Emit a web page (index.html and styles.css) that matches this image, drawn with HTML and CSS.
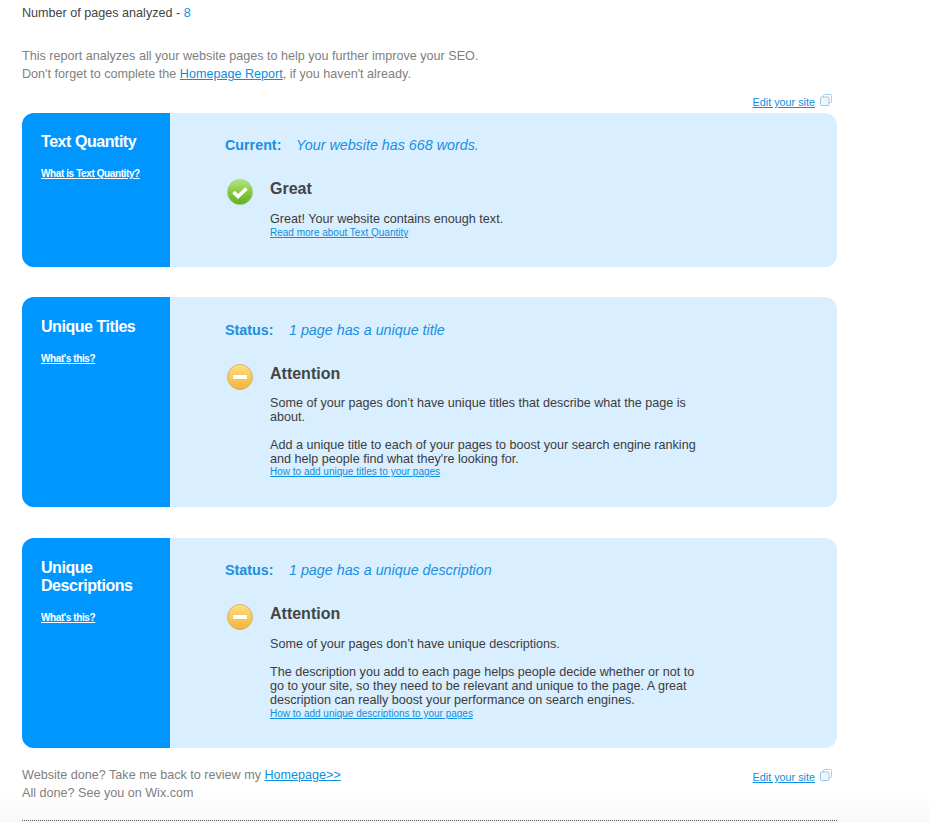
FILE: index.html
```html
<!DOCTYPE html>
<html lang="en">
<head>
<meta charset="utf-8">
<title>SEO Report</title>
<link rel="stylesheet" href="styles.css">
</head>
<body>
<main class="page">
  <p class="count">Number of pages analyzed - <span class="count-num">8</span></p>
  <p class="intro">This report analyzes all your website pages to help you further improve your SEO.<br>Don't forget to complete the <a href="#">Homepage Report</a>, if you haven't already.</p>
  <div class="edit-row">
    <a class="edit-link" href="#">Edit your site</a>
    <svg class="edit-icon" viewBox="0 0 12 12" width="12" height="12"><path d="M3.5 3V1.5a1 1 0 0 1 1-1h6a1 1 0 0 1 1 1v6a1 1 0 0 1-1 1H9" fill="none" stroke="#a9cdea"/><rect x="0.5" y="3" width="8.5" height="8.5" rx="1" fill="#eef6fc" stroke="#9cc6e8"/></svg>
  </div>

  <section class="card card-quantity">
    <div class="side">
      <h2>Text Quantity</h2>
      <a href="#">What is Text Quantity?</a>
    </div>
    <div class="body">
      <p class="status"><b class="label-current">Current:</b><i>Your website has 668 words.</i></p>
      <div class="result">
        <svg class="badge" viewBox="0 0 26 26" width="26" height="26"><defs><linearGradient id="g" x1="0" y1="0" x2="0" y2="1"><stop offset="0" stop-color="#b4e57c"/><stop offset=".55" stop-color="#82c63f"/><stop offset="1" stop-color="#62ad28"/></linearGradient></defs><circle cx="13" cy="13" r="12.6" fill="url(#g)" stroke="#a3cf7c" stroke-width=".6"/><path d="M6.5 13l4.5 4.5 8.5-8" fill="none" stroke="#fff" stroke-width="3.6"/></svg>
        <div class="result-text">
          <h3>Great</h3>
          <p>Great! Your website contains enough text.</p>
          <a class="more" href="#">Read more about Text Quantity</a>
        </div>
      </div>
    </div>
  </section>

  <section class="card card-titles">
    <div class="side">
      <h2>Unique Titles</h2>
      <a href="#">What's this?</a>
    </div>
    <div class="body">
      <p class="status"><b class="label-status">Status:</b><i>1 page has a unique title</i></p>
      <div class="result">
        <svg class="badge" viewBox="0 0 26 26" width="26" height="26"><defs><linearGradient id="y1" x1="0" y1="0" x2="0" y2="1"><stop offset="0" stop-color="#fbdf86"/><stop offset="1" stop-color="#f5b432"/></linearGradient></defs><circle cx="13" cy="13" r="12.5" fill="url(#y1)" stroke="#c9a86a" stroke-width=".8"/><rect x="6" y="11" width="14" height="4" fill="#fff"/></svg>
        <div class="result-text">
          <h3>Attention</h3>
          <p>Some of your pages don’t have unique titles that describe what the page is about.</p>
          <p class="gap">Add a unique title to each of your pages to boost your search engine ranking and help people find what they're looking for.</p>
          <a class="more" href="#">How to add unique titles to your pages</a>
        </div>
      </div>
    </div>
  </section>

  <section class="card card-desc">
    <div class="side">
      <h2>Unique Descriptions</h2>
      <a href="#">What's this?</a>
    </div>
    <div class="body">
      <p class="status"><b class="label-status">Status:</b><i>1 page has a unique description</i></p>
      <div class="result">
        <svg class="badge" viewBox="0 0 26 26" width="26" height="26"><defs><linearGradient id="y2" x1="0" y1="0" x2="0" y2="1"><stop offset="0" stop-color="#fbdf86"/><stop offset="1" stop-color="#f5b432"/></linearGradient></defs><circle cx="13" cy="13" r="12.5" fill="url(#y2)" stroke="#c9a86a" stroke-width=".8"/><rect x="6" y="11" width="14" height="4" fill="#fff"/></svg>
        <div class="result-text">
          <h3>Attention</h3>
          <p>Some of your pages don’t have unique descriptions.</p>
          <p class="gap">The description you add to each page helps people decide whether or not to go to your site, so they need to be relevant and unique to the page. A great description can really boost your performance on search engines.</p>
          <a class="more" href="#">How to add unique descriptions to your pages</a>
        </div>
      </div>
    </div>
  </section>

  <footer class="foot">
    <p>Website done? Take me back to review my <a href="#">Homepage&gt;&gt;</a><br>All done? See you on Wix.com</p>
    <div class="edit-row edit-foot">
      <a class="edit-link" href="#">Edit your site</a>
      <svg class="edit-icon" viewBox="0 0 12 12" width="12" height="12"><path d="M3.5 3V1.5a1 1 0 0 1 1-1h6a1 1 0 0 1 1 1v6a1 1 0 0 1-1 1H9" fill="none" stroke="#a9cdea"/><rect x="0.5" y="3" width="8.5" height="8.5" rx="1" fill="#eef6fc" stroke="#9cc6e8"/></svg>
    </div>
  </footer>
  <div class="rule"></div>
</main>
</body>
</html>
```
FILE: styles.css
```css
html, body { margin: 0; padding: 0; height: 823px; overflow: hidden; }
body {
  background: linear-gradient(#fff 795px, #f8f8f8 823px);
  font-family: "Liberation Sans", Arial, sans-serif;
  color: #808080;
  font-size: 12.6px;
}
.page { width: 815px; padding: 5px 0 0 22px; }
p { margin: 0; }
a { color: #0d8ee0; }
.count { color: #444; line-height: 16px; }
.count-num { color: #0d8ee0; }
.intro { margin-top: 26px; line-height: 18px; }
.edit-row { display: flex; justify-content: flex-end; align-items: flex-start; gap: 5px; padding-right: 5px; height: 20px; margin-top: 10px; }
.edit-link { font-size: 10.8px; margin-top: 3px; }
.edit-icon { display: block; margin-top: 1px; }
.card { display: flex; border-radius: 12px; overflow: hidden; background: #d9eefe; }
.card-quantity { height: 154px; }
.card-titles { height: 210px; margin-top: 30px; }
.card-desc { height: 210px; margin-top: 31px; }
.side { width: 148px; flex: none; background: #0096ff; box-sizing: border-box; padding: 21px 19px 0; color: #fff; }
.card-quantity .side { padding-top: 20px; }
.side h2 { margin: 0; font-size: 16px; line-height: 18px; font-weight: bold; color: #fff; letter-spacing: -0.45px; }
.side a { display: block; width: max-content; margin-top: 17px; font-size: 10px; font-weight: bold; color: #fff; letter-spacing: -0.4px; }
.body { flex: 1; padding: 23px 0 0 55px; }
.card-titles .body { padding-top: 24px; }
.status { color: #1a8fe3; font-size: 14.3px; line-height: 18px; }
.status b { display: inline-block; }
.label-current { width: 71px; }
.label-status { width: 64px; }
.result { display: flex; margin-top: 25px; }
.badge { flex: none; margin: 0 17px 0 2px; }
.result-text { width: 430px; padding-top: 1px; color: #3c3c3c; line-height: 14px; }
.result-text h3 { margin: 0 0 14px; font-size: 16px; line-height: 18px; color: #444; }
.card-titles h3 { margin-bottom: 13px; }
.gap { margin-top: 14px; }
.more { display: block; margin-top: 2px; font-size: 10px; line-height: 10px; }
.card-titles .more { margin-top: 1px; }
.foot { display: flex; justify-content: space-between; margin-top: 18px; line-height: 18px; }
.edit-foot { margin-top: -1px; }
.edit-foot .edit-icon { margin-top: 4px; }
.rule { margin-top: 18px; border-top: 1px dotted #555; }
```
